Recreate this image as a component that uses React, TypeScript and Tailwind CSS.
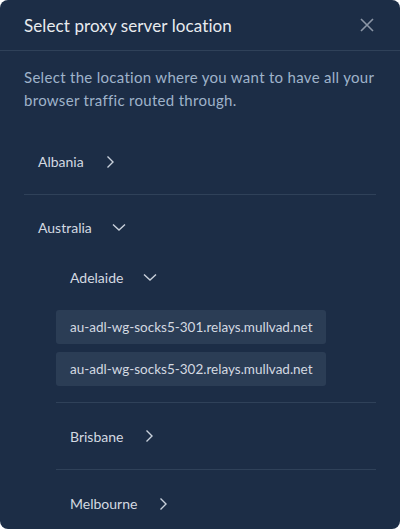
import React from 'react';

const ChevronRight: React.FC = () => (
  <svg width="12" height="14" viewBox="0 0 12 14" fill="none" className="text-[#c9d1db]">
    <path d="M3.5 1.5 L9 7 L3.5 12.5" stroke="currentColor" strokeWidth="1.4" />
  </svg>
);

const ChevronDown: React.FC = () => (
  <svg width="14" height="10" viewBox="0 0 14 10" fill="none" className="text-[#c9d1db]">
    <path d="M1 2.5 L7 8 L13 2.5" stroke="currentColor" strokeWidth="1.4" />
  </svg>
);

const servers = [
  'au-adl-wg-socks5-301.relays.mullvad.net',
  'au-adl-wg-socks5-302.relays.mullvad.net',
];

const App: React.FC = () => {
  return (
    <div
      className="w-[400px] h-[529px] bg-white overflow-hidden"
      style={{ fontFamily: 'Lato, "Noto Sans", sans-serif' }}
    >
      <div className="h-full bg-[#1c2d46] rounded-[8px] flex flex-col overflow-hidden">
        {/* Header */}
        <div className="h-[51px] shrink-0 flex items-center justify-between pl-6 pr-[26px] border-b border-[#2f4159]">
          <h1 className="text-[17px] tracking-[0.1px] text-[#e8ebef] leading-none">Select proxy server location</h1>
          <button className="text-[#8b96a6]">
            <svg width="14" height="14" viewBox="0 0 14 14" fill="none">
              <path d="M1 1 L13 13 M13 1 L1 13" stroke="currentColor" strokeWidth="1.6" />
            </svg>
          </button>
        </div>

        {/* Body */}
        <div className="px-6 pt-[15px]">
          <p className="text-[15px] tracking-[0.3px] leading-[23px] text-[#9fb3ca]">
            Select the location where you want to have all your browser traffic routed through.
          </p>

          <div className="mt-[17px]">
            {/* Albania */}
            <div className="h-[66px] flex items-center gap-[20px] px-[14px] text-[14px] text-[#d3d9e1] border-b border-[#2f4159]">
              <span>Albania</span>
              <ChevronRight />
            </div>

            {/* Australia */}
            <div>
              <div className="pt-[22px] h-[42px] flex items-center gap-[20px] px-[14px] text-[14px] text-[#d3d9e1]">
                <span>Australia</span>
                <ChevronDown />
              </div>

              <div className="ml-8">
                {/* Adelaide */}
                <div className="border-b border-[#2f4159] pb-4">
                  <div className="mt-[30px] h-[20px] flex items-center gap-[20px] px-[14px] text-[14px] text-[#d3d9e1]">
                    <span>Adelaide</span>
                    <ChevronDown />
                  </div>
                  <div className="mt-[23px] flex flex-col gap-2">
                    {servers.map((s) => (
                      <div
                        key={s}
                        className="w-[270px] h-[34px] flex items-center px-[14px] rounded-[3px] bg-[#2b3d55] text-[13.5px] text-[#d3d9e1] whitespace-nowrap"
                      >
                        {s}
                      </div>
                    ))}
                  </div>
                </div>

                {/* Brisbane */}
                <div className="h-[67px] flex items-center gap-[20px] px-[14px] text-[14px] text-[#d3d9e1] border-b border-[#2f4159]">
                  <span>Brisbane</span>
                  <ChevronRight />
                </div>

                {/* Melbourne */}
                <div className="h-[67px] flex items-center gap-[20px] px-[14px] text-[14px] text-[#d3d9e1]">
                  <span>Melbourne</span>
                  <ChevronRight />
                </div>
              </div>
            </div>
          </div>
        </div>
      </div>
    </div>
  );
};

export default App;
